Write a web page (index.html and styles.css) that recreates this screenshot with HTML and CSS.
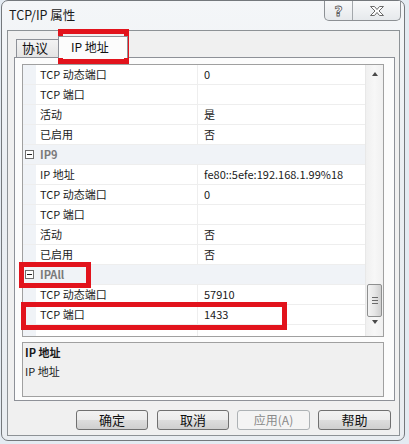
FILE: index.html
```html
<!DOCTYPE html>
<html lang="zh-CN">
<head>
<meta charset="utf-8">
<title>TCP/IP 属性</title>
<link rel="stylesheet" href="styles.css">
</head>
<body>
<div class="window">
  <div class="titlebar">
    <span class="title">TCP/IP 属性</span>
    <div class="caption">
      <span class="cbtn help">?</span>
      <span class="cbtn close">
        <svg width="18" height="12" viewBox="0 0 18 12"><path d="M2.5 1.5h4l2.5 3 2.5-3h4l-4.5 4.5 4.5 4.5h-4l-2.5-3-2.5 3h-4l4.5-4.5z" fill="#fff" stroke="#6a6a6a" stroke-width="1"/></svg>
      </span>
    </div>
  </div>
  <div class="client">
    <div class="tabs">
      <div class="tab">协议</div>
      <div class="tab active">IP 地址</div>
    </div>
    <div class="tabpage">
      <div class="grid">
        <div class="rows">
          <div class="row"><span class="gut"></span><span class="name">TCP 动态端口</span><span class="val">0</span></div>
          <div class="row"><span class="gut"></span><span class="name">TCP 端口</span><span class="val"></span></div>
          <div class="row"><span class="gut"></span><span class="name">活动</span><span class="val">是</span></div>
          <div class="row"><span class="gut"></span><span class="name">已启用</span><span class="val">否</span></div>
          <div class="row cat"><span class="gut"><span class="minus"></span></span><span class="cname">IP9</span></div>
          <div class="row"><span class="gut"></span><span class="name">IP 地址</span><span class="val">fe80::5efe:192.168.1.99%18</span></div>
          <div class="row"><span class="gut"></span><span class="name">TCP 动态端口</span><span class="val">0</span></div>
          <div class="row"><span class="gut"></span><span class="name">TCP 端口</span><span class="val"></span></div>
          <div class="row"><span class="gut"></span><span class="name">活动</span><span class="val">否</span></div>
          <div class="row"><span class="gut"></span><span class="name">已启用</span><span class="val">否</span></div>
          <div class="row cat"><span class="gut"><span class="minus"></span></span><span class="cname">IPAll</span></div>
          <div class="row"><span class="gut"></span><span class="name">TCP 动态端口</span><span class="val">57910</span></div>
          <div class="row"><span class="gut"></span><span class="name">TCP 端口</span><span class="val">1433</span></div>
          <div class="row blank"><span class="gut"></span><span class="name"></span><span class="val"></span></div>
        </div>
        <div class="scrollbar">
          <span class="arrow up"></span>
          <span class="track"></span>
          <span class="thumb"><span class="grip"></span><span class="grip"></span><span class="grip"></span></span>
          <span class="arrow down"></span>
        </div>
      </div>
      <div class="desc">
        <div class="dtitle">IP 地址</div>
        <div class="dtext">IP 地址</div>
      </div>
    </div>
    <div class="buttons">
      <button class="btn">确定</button>
      <button class="btn">取消</button>
      <button class="btn disabled">应用(A)</button>
      <button class="btn wide">帮助</button>
    </div>
  </div>
</div>
<div class="mark m1"></div>
<div class="mark m2"></div>
<div class="mark m3"></div>
</body>
</html>
```
FILE: styles.css
```css
* { box-sizing: border-box; }
html, body { margin: 0; }
body {
  position: relative;
  width: 409px;
  height: 444px;
  overflow: hidden;
  padding-left: 1px;
  background: #e4ebf2;
  font-family: "Noto Sans CJK SC", "Noto Sans", sans-serif;
  color: #1a1a1a;
}
.window {
  width: 404px;
  height: 441px;
  border: 1px solid #74787c;
  border-radius: 7px;
  background: linear-gradient(#f4f6f8, #eaeef2 40%, #e9edf1);
  display: flex;
  flex-direction: column;
}
.titlebar {
  height: 29px;
  display: flex;
  align-items: flex-start;
}
.title {
  padding: 6px 0 0 7px;
  font-size: 12.5px;
  line-height: 16px;
  color: #1b1b1b;
}
.caption {
  margin-left: auto;
  margin-right: 3px;
  display: flex;
  height: 20px;
  border: 1px solid #8c9094;
  border-top: none;
  border-radius: 0 0 5px 5px;
  background: linear-gradient(#f8f9fa, #e6e9ec);
}
.cbtn {
  display: flex;
  align-items: center;
  justify-content: center;
  height: 19px;
}
.help {
  width: 28px;
  border-right: 1px solid #a3a7ab;
  font-family: "DejaVu Sans", sans-serif;
  font-weight: bold;
  font-size: 14px;
  color: #fff;
  -webkit-text-stroke: 0.8px #5c5c5c;
}
.close { width: 47px; }
.client {
  margin-left: 5px;
  width: 393px;
  height: 406px;
  border: 1px solid #8d9296;
  background: #f0f0f0;
  padding-top: 5px;
}
.tabs {
  display: flex;
  align-items: flex-end;
  height: 21px;
  margin-left: 8px;
}
.tab {
  height: 18px;
  width: 43px;
  border: 1px solid #8e9198;
  border-bottom: none;
  background: linear-gradient(#f3f3f3, #e4e4e4);
  font-size: 13px;
  line-height: 16px;
  padding-left: 5px;
  color: #111;
}
.tab.active {
  width: 70px;
  height: 22px;
  margin-left: -1px;
  margin-bottom: -1px;
  background: #fcfcfc;
  position: relative;
  z-index: 1;
  font-size: 12px;
  line-height: 20px;
  padding-left: 12px;
}
.tabpage {
  margin-left: 6px;
  width: 381px;
  height: 344px;
  border: 1px solid #8e9198;
  background: #fcfcfc;
  padding: 6px 0 0 7px;
}
.grid {
  width: 362px;
  height: 273px;
  border: 1px solid #a0a0a0;
  background: #fff;
  display: flex;
  overflow: hidden;
}
.rows { width: 342px; }
.row {
  display: flex;
  height: 20px;
  border-bottom: 1px solid #eeeeee;
  font-size: 11px;
  line-height: 19px;
}
.row.blank { border-bottom: none; }
.gut {
  width: 13px;
  flex: none;
  background: #f0f3f7;
  position: relative;
}
.name {
  width: 162px;
  flex: none;
  padding-left: 4px;
  border-right: 1px solid #eeeeee;
  white-space: nowrap;
}
.val {
  flex: 1;
  padding-left: 6px;
  white-space: nowrap;
}
.row.cat { background: #f0f3f7; }
.cname {
  padding-left: 4px;
  font-weight: bold;
  color: #7a7a7a;
}
.minus {
  position: absolute;
  left: 2px;
  top: 5px;
  width: 9px;
  height: 9px;
  border: 1px solid #6e6e6e;
  background: #fff;
}
.minus::after {
  content: "";
  position: absolute;
  left: 1px;
  top: 3px;
  width: 5px;
  height: 1px;
  background: #222;
}
.scrollbar {
  width: 18px;
  border-left: 1px solid #e8e8e8;
  background: linear-gradient(90deg, #f0f0f0, #f7f7f7 50%, #f0f0f0);
  display: flex;
  flex-direction: column;
  align-items: center;
  position: relative;
}
.arrow {
  width: 0;
  height: 0;
  border-left: 3.5px solid transparent;
  border-right: 3.5px solid transparent;
}
.arrow.up { margin-top: 7px; border-bottom: 4px solid #4a4a4a; }
.arrow.down { margin-top: 3px; border-top: 4px solid #4a4a4a; }
.track { height: 208px; }
.thumb {
  width: 15px;
  height: 33px;
  border: 1px solid #8e8f8f;
  border-radius: 2px;
  background: linear-gradient(90deg, #f3f3f3, #e6e6e6 50%, #cfcfcf);
  display: flex;
  flex-direction: column;
  align-items: center;
  justify-content: center;
  gap: 2px;
}
.grip { width: 6px; height: 1px; background: #6a6a6a; }
.desc {
  margin-top: 5px;
  width: 362px;
  height: 55px;
  border: 1px solid #a0a0a0;
  background: #f0f0f0;
  padding: 1px 0 0 2px;
  font-size: 11px;
  line-height: 16px;
}
.dtitle { font-weight: bold; }
.dtext { margin-top: 3px; }
.buttons {
  display: flex;
  gap: 9px;
  margin-top: 9px;
  padding-left: 68px;
}
.btn {
  width: 72px;
  height: 20px;
  padding: 0;
  border: 1px solid #707070;
  border-radius: 3px;
  background: linear-gradient(#f2f2f2, #ebebeb 50%, #dddddd 51%, #cfcfcf);
  font-family: "Noto Sans CJK SC", sans-serif;
  font-size: 13px;
  line-height: 18px;
  color: #111;
}
.btn.disabled {
  width: 73px;
  margin-left: -1px;
  border-color: #adb2b5;
  background: #f4f4f4;
  color: #8a8a8a;
  font-size: 12px;
}
.btn.wide { width: 73px; margin-left: -1px; }
.mark {
  position: absolute;
  border: 5px solid #e2131c;
}
.m1 { left: 58px; top: 29px; width: 71px; height: 35px; }
.m2 { left: 19px; top: 262px; width: 72px; height: 26px; }
.m3 { left: 21px; top: 302px; width: 266px; height: 28px; }
```
